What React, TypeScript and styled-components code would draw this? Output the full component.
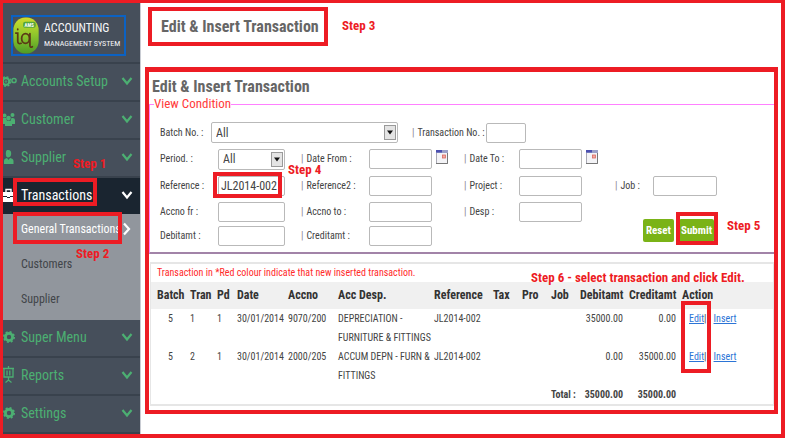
import React from 'react';
import styled, { createGlobalStyle, css } from 'styled-components';

const red = '#ed1c24';
const green = '#4caf72';

const GlobalStyle = createGlobalStyle`
  *, *::before, *::after { box-sizing: border-box; }
  body {
    margin: 0;
    background: #fff;
    color: #444;
    font-family: 'Roboto Condensed', 'Liberation Sans', Arial, sans-serif;
    font-size: 10px;
  }
  button, input, select { font: inherit; color: inherit; }
  svg { flex: none; display: block; }
`;

const Page = styled.div`
  display: flex;
  min-height: 100vh;
  border: 3px solid ${red};
  border-right-width: 4px;
  border-bottom-width: 4px;
`;

/* ---------- annotations ---------- */

const Step = styled.span<{ $left: number; $top: number }>`
  position: absolute;
  z-index: 3;
  left: ${(p) => p.$left}px;
  top: ${(p) => p.$top}px;
  color: ${red};
  font-size: 13px;
  font-weight: 700;
  line-height: 16px;
  white-space: nowrap;
`;

const Frame = styled.span<{ $left: number; $top: number; $width: number; $height: number }>`
  position: absolute;
  z-index: 2;
  left: ${(p) => p.$left}px;
  top: ${(p) => p.$top}px;
  width: ${(p) => p.$width}px;
  height: ${(p) => p.$height}px;
  border: 4px solid ${red};
  pointer-events: none;
`;

/* ---------- sidebar ---------- */

const Sidebar = styled.aside`
  flex: none;
  width: 138px;
  background: #464f5b;
  border-right: 1px solid #c9ccd3;
`;

const Brand = styled.div`
  height: 61px;
  padding: 12px 0 0 8px;
  border-bottom: 2px solid #39424d;
`;

const BrandLink = styled.a`
  display: flex;
  align-items: center;
  gap: 4px;
  width: 115px;
  height: 41px;
  border: 2px solid #0b62c4;
  color: #f4f5f7;
  text-decoration: none;
`;

const BrandText = styled.span`
  display: flex;
  flex-direction: column;
  white-space: nowrap;
  font-size: 8px;
  line-height: 16px;
`;

const BrandName = styled.strong`
  font-size: 12px;
  font-weight: 400;
`;

const MenuList = styled.ul`
  list-style: none;
  margin: 0;
  padding: 0;
`;

const MenuItem = styled.li`
  position: relative;
`;

const MenuButton = styled.button<{ $open?: boolean }>`
  display: grid;
  grid-template-columns: 14px 1fr 12px;
  column-gap: 4px;
  align-items: center;
  width: 100%;
  height: ${(p) => (p.$open ? 36 : 38)}px;
  padding: 0 7px 3px 0;
  border: 0;
  border-bottom: ${(p) => (p.$open ? 0 : 2)}px solid #39424d;
  background: ${(p) => (p.$open ? '#1a2530' : 'transparent')};
  color: ${(p) => (p.$open ? '#fff' : green)};
  font-size: 14px;
  text-align: left;
  white-space: nowrap;
`;

const SubMenu = styled.ul`
  list-style: none;
  margin: 0;
  padding: 0 0 1px;
  background: #91969d;
`;

const SubLink = styled.a<{ $active?: boolean }>`
  display: flex;
  align-items: center;
  justify-content: space-between;
  height: 35px;
  padding: 0 7px 6px 18px;
  color: ${(p) => (p.$active ? '#fff' : '#414549')};
  font-size: 12px;
  text-decoration: none;
  white-space: nowrap;
`;

/* ---------- main area ---------- */

const Main = styled.main`
  position: relative;
  flex: 1;
  min-width: 0;
  padding: 4px 3px 18px 4px;
`;

const PageTitle = styled.h1`
  width: fit-content;
  margin: 0 0 21px 3px;
  padding: 0 5px 0 9px;
  border: 4px solid ${red};
  color: #666;
  font-size: 16px;
  line-height: 31px;
`;

const Panel = styled.section`
  position: relative;
  border: 4px solid ${red};
  border-top-width: 5px;
  padding: 5px 0 4px;
`;

const PanelTitle = styled.h2`
  margin: 0 0 0 3px;
  color: #666;
  font-size: 16px;
  line-height: 20px;
`;

const Conditions = styled.fieldset`
  position: relative;
  min-width: 0;
  margin: 0;
  padding: 9px 0 4px 10px;
  border: 1px solid #ff80ff;
  border-right: 0;
  border-bottom: 2px solid #a283a8;
`;

const Legend = styled.legend`
  margin-left: -6px;
  padding: 0;
  color: #ff3b3b;
  font-size: 13px;
  line-height: 14px;
`;

const FirstRow = styled.div`
  display: grid;
  grid-template-columns: 51px 187px 14px 74px 40px;
  align-items: center;
  height: 25px;
`;

const Fields = styled.div`
  display: grid;
  grid-template-columns: 58px 67px 16px 68px 63px 32px 55px 63px 33px 38px 64px;
  grid-template-rows: 28px 26px 25px 24px;
  align-items: center;
`;

const Label = styled.label<{ $bar?: boolean }>`
  white-space: nowrap;
  line-height: 14px;
  ${(p) =>
    p.$bar &&
    css`
      &::before { content: '|'; margin-right: 3px; color: #8a7f8f; }
    `}
`;

const TextBox = styled.input`
  width: 100%;
  height: 20px;
  padding: 0 2px;
  border: 1px solid #b9b9b9;
  border-radius: 2px;
  background: #fff;
  font-size: 12px;
`;

const SelectShell = styled.span`
  position: relative;
  display: block;
  height: 21px;
`;

const SelectBox = styled.select`
  appearance: none;
  width: 100%;
  height: 100%;
  padding: 0 16px 0 4px;
  border: 1px solid #b9b9b9;
  border-radius: 2px;
  background: #fff;
  font-size: 12px;
`;

const SelectArrow = styled.span`
  position: absolute;
  top: 3px;
  right: 2px;
  display: grid;
  place-items: center;
  width: 12px;
  height: 15px;
  border: 1px solid #9a9a9a;
  background: #e4e4e4;
  pointer-events: none;
`;

const CalendarButton = styled.button`
  display: flex;
  align-items: center;
  height: 16px;
  margin: 0 0 4px 4px;
  padding: 0;
  border: 0;
  background: none;
`;

const Actions = styled.div`
  grid-column: 9 / 12;
  grid-row: 3 / 5;
  align-self: start;
  display: flex;
  gap: 5px;
  padding: 20px 0 0 61px;
`;

const ActionButton = styled.button`
  height: 23px;
  padding: 0 2px;
  min-width: 31px;
  border: 0;
  border-radius: 2px;
  background: #7ab317;
  color: #fff;
  font-size: 11px;
  font-weight: 700;
`;

const Results = styled.section`
  position: relative;
  margin: 8px 0 0 1px;
  border: 2px solid #e6e6e6;
  border-left-width: 1px;
  border-right-width: 1px;
`;

const Notice = styled.p`
  margin: 0;
  padding-left: 6px;
  color: #ff2a2a;
  font-size: 10px;
  line-height: 18px;
`;

const Table = styled.table`
  width: 100%;
  table-layout: fixed;
  border-collapse: collapse;
  line-height: 19px;
`;

const Col = styled.col<{ $w?: number }>`
  ${(p) => p.$w && `width: ${p.$w}px;`}
`;

const HeadCell = styled.th<{ $right?: boolean }>`
  height: 27px;
  padding: 0 3px;
  background: #f0f0f0;
  color: #333;
  font-size: 12px;
  font-weight: 700;
  text-align: ${(p) => (p.$right ? 'right' : 'left')};
  white-space: nowrap;
`;

const Cell = styled.td<{ $align?: 'right' | 'center'; $bold?: boolean }>`
  padding: 0 3px;
  vertical-align: top;
  text-align: ${(p) => p.$align || 'left'};
  font-weight: ${(p) => (p.$bold ? 700 : 400)};
  white-space: nowrap;
`;

const ActionLink = styled.a`
  color: #2b74d6;
  text-decoration: underline;
  margin-left: 7px;
`;

const TableShell = styled.div`
  padding-left: 3px;
  background: linear-gradient(#f0f0f0, #f0f0f0) no-repeat 0 0 / 100% 27px;
`;

/* ---------- drawings ---------- */

const Chevron = ({ right }: { right?: boolean }) => (
  <svg width="12" height="14" viewBox="0 0 12 14" fill="none" stroke="currentColor" strokeWidth="2.2">
    <path d={right ? 'M3 1.5 8 7 3 12.5' : 'M1.5 4 6 9.5 10.5 4'} />
  </svg>
);

const Logo = () => (
  <svg width="27" height="37" viewBox="0 0 27 38">
    <defs>
      <linearGradient id="leaf" x1="0" y1="0" x2="0" y2="1">
        <stop offset="0" stopColor="#cfdc2c" />
        <stop offset="0.5" stopColor="#8cc52c" />
        <stop offset="1" stopColor="#4f9b26" />
      </linearGradient>
    </defs>
    <rect x="0" y="0.500" width="26" height="37" rx="12" ry="13" fill="url(#leaf)" />
    <rect x="10" y="5" width="13" height="6" rx="2" fill="#55a63a" />
    <text x="11.5" y="10" fontSize="5" fontWeight="700" fill="#fff">AMS</text>
    <g fill="none" stroke="#5b3a16" strokeWidth="1.8" strokeLinecap="round">
      <path d="M2.500 16.500h2v8q0 4 3.500 2.500M4.500 12.500v.4" />
      <ellipse cx="12.500" cy="22" rx="4" ry="5" />
      <path d="M17 17v12q0 3 2.500 1.500" />
    </g>
  </svg>
);

const Cog = () => (
  <svg width="12" height="14" viewBox="-6 -7 12 14" fill="none" stroke="currentColor">
    <circle r="3.6" strokeWidth="2.8" />
    <circle r="5.2" strokeWidth="1.6" strokeDasharray="2 2.08" />
  </svg>
);

const Cogs = () => (
  <svg width="14" height="14" viewBox="0 0 14 14" fill="none" stroke="currentColor">
    <circle cx="3" cy="7.500" r="3.300" strokeWidth="2.200" />
    <circle cx="3" cy="7.500" r="4.800" strokeWidth="1.200" strokeDasharray="2 1.770" />
    <circle cx="3" cy="7.500" r="0.800" strokeWidth="1" />
    <circle cx="11" cy="6.500" r="2.100" strokeWidth="1.500" />
  </svg>
);

const People = () => (
  <svg width="12" height="14" viewBox="0 0 12 14" fill="currentColor">
    <circle cx="1.500" cy="3.500" r="2" />
    <circle cx="9.500" cy="3" r="2" />
    <circle cx="5.500" cy="6" r="2.300" />
    <path d="M0 6h3L4 9v3H0zM7.500 9l1-3q3.500-.5 3.500 2V12H8zM2 14V11q0-2.500 3.500-2.500T9 11v3z" />
  </svg>
);

const Person = () => (
  <svg width="12" height="14" viewBox="0 0 12 14" fill="currentColor">
    <path d="M5.500 0q2.700 0 2.700 3.500T5.500 7.500 2.800 3.500 5.500 0zM1 14v-3q0-2.500 3-3l1.500 2L7 8q3.500.5 3.500 3v3z" />
  </svg>
);

const Case = () => (
  <svg width="12" height="14" viewBox="0 0 12 14" fill="currentColor">
    <path d="M0 4h11v4H0zM0 9h4v1h3V9h4v5H0zM4 8h3v1H4z" />
    <path d="M3 4V1.500h5V4" fill="none" stroke="currentColor" strokeWidth="1.400" />
  </svg>
);

const Board = () => (
  <svg width="12" height="18" viewBox="0 0 12 18" fill="none" stroke="currentColor" strokeWidth="1.300">
    <path d="M0 2.500h11M1 2.500v8.500h9V2.500M4 4.500v5M6.800 4.500v5M5.500 0v2M5.500 11v4M2.500 16.500 5.500 14l3 2.500" />
  </svg>
);

const CalendarIcon = () => (
  <svg width="12" height="14" viewBox="0 0 12 14">
    <rect x="0.500" y="0.500" width="11" height="13" fill="#f3f3f6" stroke="#a9a9b4" />
    <rect width="12" height="3" fill="#9aa0c8" />
    <rect width="6" height="2.500" fill="#4a4fb0" />
    <rect x="6.500" y="5" width="3" height="3" fill="#f2a9a2" stroke="#d86a60" strokeWidth="0.800" />
    <path d="M11.500 3v10.500H0" fill="none" stroke="#777" />
  </svg>
);

/* ---------- composed parts ---------- */

const DropDown = ({ id }: { id: string }) => (
  <SelectShell>
    <SelectBox id={id} defaultValue="All">
      <option>All</option>
    </SelectBox>
    <SelectArrow>
      <svg width="6" height="5" viewBox="0 0 6 5"><path d="M0 0.500h6L3 4.500z" fill="#111" /></svg>
    </SelectArrow>
  </SelectShell>
);

const Entry = ({ icon, text, open }: { icon: React.ReactNode; text: string; open?: boolean }) => (
  <MenuButton type="button" $open={open} aria-expanded={!!open}>
    {icon}
    <span>{text}</span>
    <Chevron />
  </MenuButton>
);

const columns = [
  { name: 'Batch', w: 33 },
  { name: 'Tran', w: 27 },
  { name: 'Pd', w: 20 },
  { name: 'Date', w: 51 },
  { name: 'Accno', w: 50 },
  { name: 'Acc Desp.', w: 96 },
  { name: 'Reference', w: 59 },
  { name: 'Tax', w: 29 },
  { name: 'Pro', w: 29 },
  { name: 'Job', w: 29 },
  { name: 'Debitamt', w: 49, right: true },
  { name: 'Creditamt', w: 53, right: true },
  { name: 'Action' },
];

const rows = [
  { tran: 1, acc: '9070/200', desc: ['DEPRECIATION -', 'FURNITURE & FITTINGS'], debit: '35000.00', credit: '0.00' },
  { tran: 2, acc: '2000/205', desc: ['ACCUM DEPN - FURN &', 'FITTINGS'], debit: '0.00', credit: '35000.00' },
];

export default function App() {
  return (
    <>
      <GlobalStyle />
      <Page>
        <Sidebar>
          <Brand>
            <BrandLink href="#">
              <Logo />
              <BrandText>
                <BrandName>ACCOUNTING</BrandName>
                MANAGEMENT SYSTEM
              </BrandText>
            </BrandLink>
          </Brand>
          <MenuList>
            <MenuItem><Entry icon={<Cogs />} text="Accounts Setup" /></MenuItem>
            <MenuItem><Entry icon={<People />} text="Customer" /></MenuItem>
            <MenuItem>
              <Entry icon={<Person />} text="Supplier" />
              <Step $left={70} $top={16}>Step 1</Step>
            </MenuItem>
            <MenuItem>
              <Entry icon={<Case />} text="Transactions" open />
              <Frame $left={10} $top={0} $width={84} $height={28} />
              <SubMenu>
                <MenuItem>
                  <SubLink href="#" $active>General Transactions <Chevron right /></SubLink>
                  <Frame $left={10} $top={-2} $width={109} $height={32} />
                </MenuItem>
                <MenuItem>
                  <SubLink href="#">Customers</SubLink>
                  <Step $left={73} $top={-3}>Step 2</Step>
                </MenuItem>
                <MenuItem><SubLink href="#">Supplier</SubLink></MenuItem>
              </SubMenu>
            </MenuItem>
            <MenuItem><Entry icon={<Cog />} text="Super Menu" /></MenuItem>
            <MenuItem><Entry icon={<Board />} text="Reports" /></MenuItem>
            <MenuItem><Entry icon={<Cog />} text="Settings" /></MenuItem>
          </MenuList>
        </Sidebar>

        <Main>
          <PageTitle>Edit &amp; Insert Transaction</PageTitle>
          <Step $left={201} $top={15}>Step 3</Step>
          <Panel>
            <PanelTitle>Edit &amp; Insert Transaction</PanelTitle>
            <Conditions>
              <Legend>View Condition</Legend>
              <FirstRow>
                <Label htmlFor="batch">Batch No. :</Label>
                <DropDown id="batch" />
                <span />
                <Label htmlFor="tranNo" $bar>Transaction No. :</Label>
                <TextBox id="tranNo" />
              </FirstRow>
              <Fields>
                <Label htmlFor="period">Period. :</Label>
                <DropDown id="period" />
                <span />
                <Label htmlFor="from" $bar>Date From :</Label>
                <TextBox id="from" />
                <CalendarButton type="button" aria-label="Pick start date"><CalendarIcon /></CalendarButton>
                <Label htmlFor="to" $bar>Date To :</Label>
                <TextBox id="to" />
                <CalendarButton type="button" aria-label="Pick end date"><CalendarIcon /></CalendarButton>
                <span />
                <span />

                <Label htmlFor="ref">Reference :</Label>
                <TextBox id="ref" defaultValue="JL2014-002" />
                <span />
                <Label htmlFor="ref2" $bar>Reference2 :</Label>
                <TextBox id="ref2" />
                <span />
                <Label htmlFor="project" $bar>Project :</Label>
                <TextBox id="project" />
                <span />
                <Label htmlFor="job" $bar>Job :</Label>
                <TextBox id="job" />

                <Label htmlFor="accFrom">Accno fr :</Label>
                <TextBox id="accFrom" />
                <span />
                <Label htmlFor="accTo" $bar>Accno to :</Label>
                <TextBox id="accTo" />
                <span />
                <Label htmlFor="desp" $bar>Desp :</Label>
                <TextBox id="desp" />
                <Actions>
                  <ActionButton type="reset">Reset</ActionButton>
                  <ActionButton type="submit">Submit</ActionButton>
                </Actions>

                <Label htmlFor="debit">Debitamt :</Label>
                <TextBox id="debit" />
                <span />
                <Label htmlFor="credit" $bar>Creditamt :</Label>
                <TextBox id="credit" />
              </Fields>
              <Frame $left={63} $top={61} $width={69} $height={26} />
              <Frame $left={526} $top={101} $width={42} $height={33} />
              <Step $left={138} $top={51}>Step 4</Step>
              <Step $left={577} $top={107}>Step 5</Step>
            </Conditions>

            <Results>
              <Notice>Transaction in *Red colour indicate that new inserted transaction.</Notice>
              <TableShell>
                <Table>
                  <colgroup>
                    {columns.map((c) => <Col key={c.name} $w={c.w} />)}
                  </colgroup>
                  <thead>
                    <tr>
                      {columns.map((c) => (
                        <HeadCell key={c.name} scope="col" $right={c.right}>{c.name}</HeadCell>
                      ))}
                    </tr>
                  </thead>
                  <tbody>
                    {rows.map((r) => (
                      <tr key={r.tran}>
                        <Cell $align="center">5</Cell>
                        <Cell>{r.tran}</Cell>
                        <Cell>1</Cell>
                        <Cell>30/01/2014</Cell>
                        <Cell>{r.acc}</Cell>
                        <Cell>{r.desc[0]}<br />{r.desc[1]}</Cell>
                        <Cell>JL2014-002</Cell>
                        <Cell /><Cell /><Cell />
                        <Cell $align="right">{r.debit}</Cell>
                        <Cell $align="right">{r.credit}</Cell>
                        <Cell>
                          <ActionLink href="#">Edit</ActionLink>|
                          <ActionLink href="#">Insert</ActionLink>
                        </Cell>
                      </tr>
                    ))}
                  </tbody>
                  <tfoot>
                    <tr>
                      <Cell colSpan={9} />
                      <Cell $bold $align="right">Total :</Cell>
                      <Cell $bold $align="right">35000.00</Cell>
                      <Cell $bold $align="right">35000.00</Cell>
                      <Cell />
                    </tr>
                  </tfoot>
                </Table>
              </TableShell>
              <Step $left={380} $top={6}>Step 6 - select transaction and click Edit.</Step>
              <Frame $left={530} $top={37} $width={30} $height={72} />
            </Results>
          </Panel>
        </Main>
      </Page>
    </>
  );
}
